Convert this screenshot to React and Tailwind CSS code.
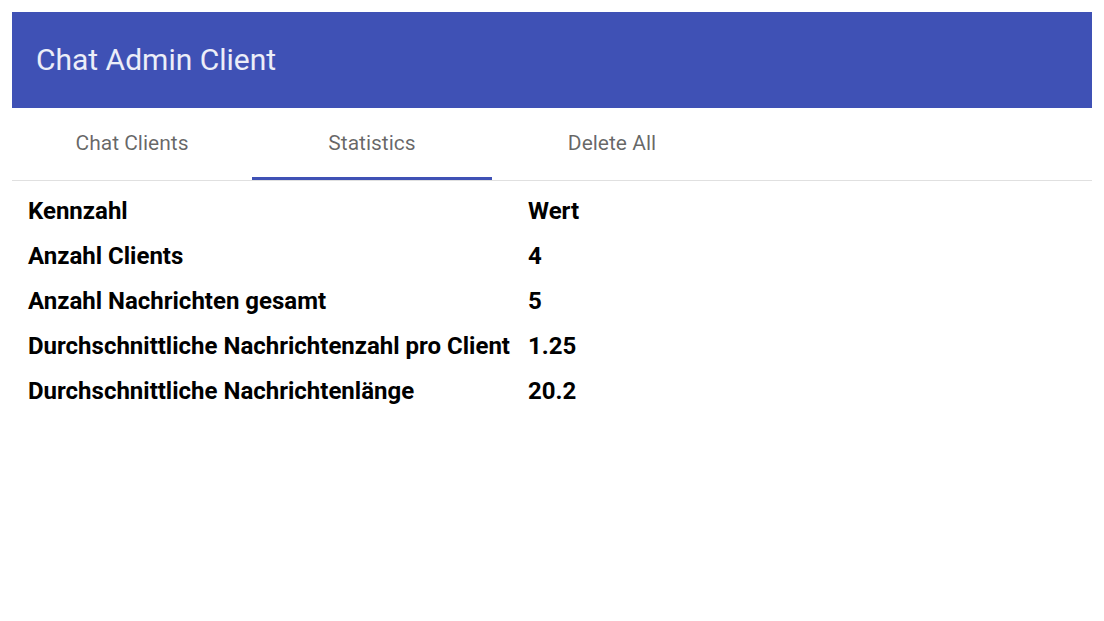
import { useState } from "react";

const stats = [
  ["Kennzahl", "Wert"],
  ["Anzahl Clients", "4"],
  ["Anzahl Nachrichten gesamt", "5"],
  ["Durchschnittliche Nachrichtenzahl pro Client", "1.25"],
  ["Durchschnittliche Nachrichtenlänge", "20.2"],
];

const tabs = ["Chat Clients", "Statistics", "Delete All"];

export default function App() {
  const [active, setActive] = useState(1);

  return (
    <main className="min-h-screen bg-white p-3" style={{ fontFamily: "Roboto, 'Noto Sans', sans-serif" }}>
      <header className="flex h-[96px] items-center bg-[#3f51b5] px-6 pb-[2px]">
        <h1 className="text-[30px] font-normal text-white/90">Chat Admin Client</h1>
      </header>

      <nav className="flex h-[73px] border-b border-[#e0e0e0]">
        {tabs.map((t, i) => (
          <button
            key={t}
            onClick={() => setActive(i)}
            className="relative flex w-[240px] items-center justify-center pb-[1px] text-[21px] text-black/60"
          >
            {t}
            {i === active && <span className="absolute bottom-0 left-0 h-[3px] w-full bg-[#3f51b5]" />}
          </button>
        ))}
      </nav>

      <div className="flex flex-col pt-[7px] pl-4">
        {stats.map(([k, v]) => (
          <div key={k} className="flex h-[45px] items-center text-[24px] font-bold text-black">
            <div className="w-[500px]">{k}</div>
            <div>{v}</div>
          </div>
        ))}
      </div>
    </main>
  );
}
